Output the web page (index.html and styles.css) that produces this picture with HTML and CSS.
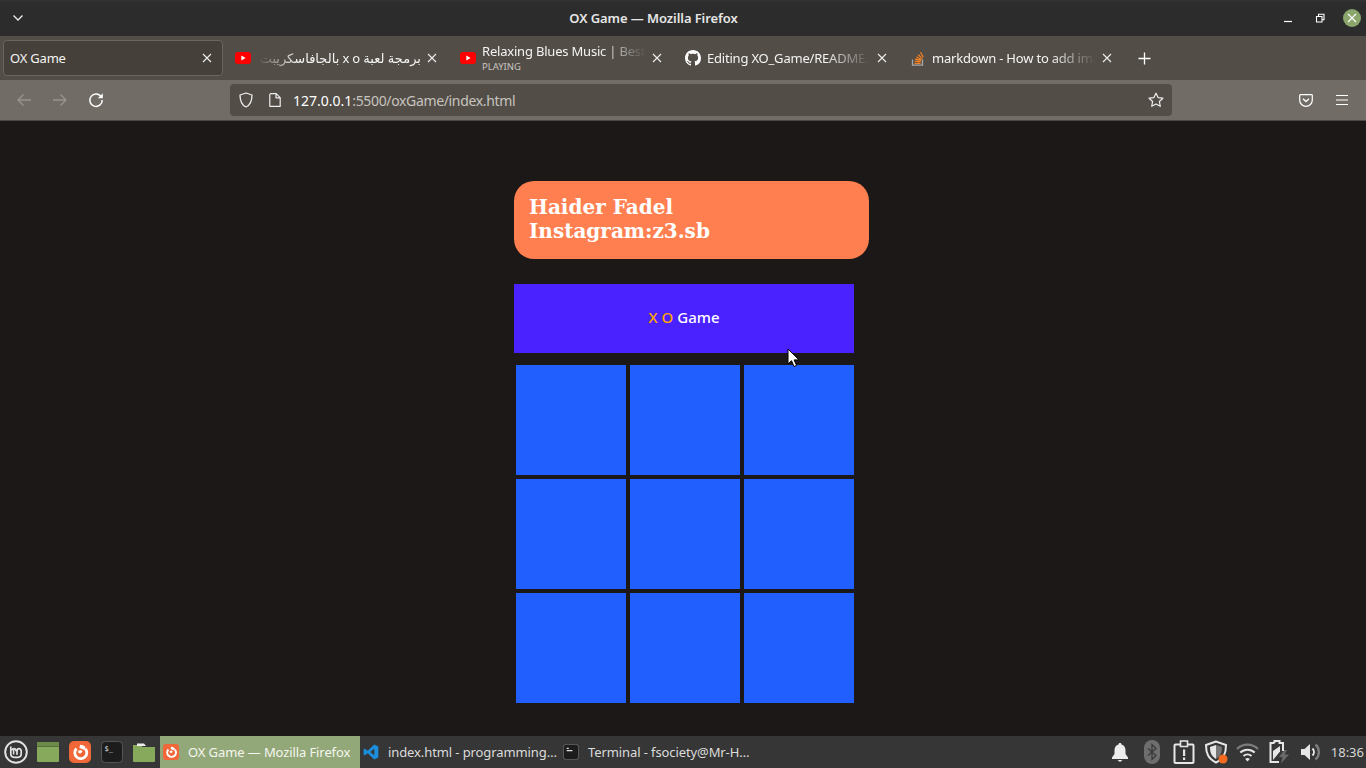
FILE: index.html
```html
<!DOCTYPE html>
<html lang="en">
<head>
<meta charset="utf-8">
<title>OX Game</title>
<link rel="stylesheet" href="styles.css">
</head>
<body>
<div class="window">
  <header class="titlebar">
    <svg class="wm-menu" width="12" height="8" viewBox="0 0 12 8"><path d="M1.500 1.500 6 6l4.500-4.500" fill="none" stroke="#eee" stroke-width="1.300"/></svg>
    <div class="title">OX Game — Mozilla Firefox</div>
    <div class="wm-buttons">
      <svg width="10" height="10" viewBox="0 0 10 10"><path d="M1 8.500h8" stroke="#fff" stroke-width="1.200"/></svg>
      <svg width="10" height="10" viewBox="0 0 10 10"><path d="M1.500 3.500h5.500v5.500H1.500z M3.500 3V1.200H9v5.500H7.300" fill="none" stroke="#fff" stroke-width="1.100"/></svg>
      <span class="wm-close"><svg width="10" height="10" viewBox="0 0 10 10"><path d="M1 1l8 8M9 1l-8 8" stroke="#fff" stroke-width="1.100"/></svg></span>
    </div>
  </header>

  <nav class="tabstrip">
    <div class="tab active">
      <span class="tab-label">OX Game</span>
      <svg class="close" width="10" height="10" viewBox="0 0 10 10"><path d="M1 1l8 8M9 1l-8 8" stroke="#eee" stroke-width="1.100"/></svg>
    </div>
    <div class="tab">
      <svg class="fav" width="16" height="12" viewBox="0 0 16 12"><rect width="16" height="12" rx="3" fill="#f00"/><path d="M6.300 3.500v5l4.300-2.500z" fill="#fff"/></svg>
      <span class="tab-label fade rtl" dir="rtl">برمجة لعبة x o بالجافاسكريبت</span>
      <svg class="close" width="10" height="10" viewBox="0 0 10 10"><path d="M1 1l8 8M9 1l-8 8" stroke="#eee" stroke-width="1.100"/></svg>
    </div>
    <div class="tab">
      <svg class="fav" width="16" height="12" viewBox="0 0 16 12"><rect width="16" height="12" rx="3" fill="#f00"/><path d="M6.300 3.500v5l4.300-2.500z" fill="#fff"/></svg>
      <span class="tab-stack">
        <span class="tab-label fade">Relaxing Blues Music | Best of Blues</span>
        <span class="tab-sub">PLAYING</span>
      </span>
      <svg class="close" width="10" height="10" viewBox="0 0 10 10"><path d="M1 1l8 8M9 1l-8 8" stroke="#eee" stroke-width="1.100"/></svg>
    </div>
    <div class="tab">
      <svg class="fav" width="16" height="16" viewBox="0 0 16 16"><path fill="#fff" d="M8 0C3.580 0 0 3.580 0 8c0 3.540 2.290 6.530 5.470 7.590.4.070.55-.17.55-.38 0-.19-.01-.82-.01-1.490-2.010.37-2.530-.49-2.690-.94-.09-.23-.48-.94-.82-1.130-.28-.15-.68-.52-.01-.53.630-.01 1.080.58 1.230.82.720 1.210 1.870.87 2.330.66.070-.52.280-.87.510-1.070-1.780-.2-3.640-.89-3.640-3.950 0-.87.310-1.590.820-2.150-.08-.2-.36-1.020.08-2.120 0 0 .67-.21 2.200.82.640-.18 1.320-.27 2-.27s1.360.09 2 .27c1.530-1.040 2.200-.82 2.200-.82.440 1.100.16 1.920.08 2.120.51.560.82 1.270.82 2.150 0 3.070-1.870 3.750-3.650 3.950.29.250.54.730.54 1.480 0 1.070-.01 1.930-.01 2.200 0 .21.150.46.550.38A8.010 8.010 0 0 0 16 8c0-4.420-3.580-8-8-8z"/></svg>
      <span class="tab-label fade">Editing XO_Game/README.md</span>
      <svg class="close" width="10" height="10" viewBox="0 0 10 10"><path d="M1 1l8 8M9 1l-8 8" stroke="#eee" stroke-width="1.100"/></svg>
    </div>
    <div class="tab">
      <svg class="fav" width="16" height="16" viewBox="0 0 16 16"><path d="M2.500 9.500v5.700h10V9.500" fill="none" stroke="#a8a8a8" stroke-width="1.300"/><path d="M4.500 13.300h6M4.700 11.200l5.900.6M5.300 9l5.600 1.500M6.500 6.800l5 2.900M8.300 4.700l4.100 3.900M10.500 2.300l2.800 4.900" stroke="#f48024" stroke-width="1.300"/></svg>
      <span class="tab-label fade">markdown - How to add images to README</span>
      <svg class="close" width="10" height="10" viewBox="0 0 10 10"><path d="M1 1l8 8M9 1l-8 8" stroke="#eee" stroke-width="1.100"/></svg>
    </div>
    <svg class="newtab" width="13" height="13" viewBox="0 0 13 13"><path d="M6.500.5v12M.5 6.500h12" stroke="#fff" stroke-width="1.300"/></svg>
  </nav>

  <div class="toolbar">
    <div class="nav-buttons">
      <svg width="16" height="16" viewBox="0 0 16 16"><path d="M15 8H2M7.500 2.500 2 8l5.500 5.500" fill="none" stroke="#97948e" stroke-width="1.300"/></svg>
      <svg width="16" height="16" viewBox="0 0 16 16"><path d="M1 8h13M8.500 2.500 14 8l-5.500 5.500" fill="none" stroke="#97948e" stroke-width="1.300"/></svg>
      <svg width="16" height="16" viewBox="0 0 16 16"><path d="M13.300 5A6.200 6.200 0 1 0 14.200 8" fill="none" stroke="#fff" stroke-width="1.500"/><path d="M14.800 1.200v5h-5z" fill="#fff"/></svg>
    </div>
    <div class="urlbar">
      <svg class="shield" width="16" height="16" viewBox="0 0 16 16"><path d="M8 1 2 3c0 6 1.500 10 6 12 4.500-2 6-6 6-12z" fill="none" stroke="#eee" stroke-width="1.300" stroke-linejoin="round"/></svg>
      <svg class="page" width="12" height="14" viewBox="0 0 12 14"><path d="M1.600.700h5.600l4 4v8.600H.8V1.500z M7 .8v4h4" fill="none" stroke="#eee" stroke-width="1.200" stroke-linejoin="round"/></svg>
      <span class="url"><span class="url-host">127.0.0.1</span><span class="url-rest">:5500/oxGame/index.html</span></span>
      <svg class="star" width="16" height="16" viewBox="0 0 16 16"><path d="m8 1.200 2.100 4.400 4.800.6-3.500 3.300.9 4.800L8 12l-4.300 2.300.9-4.800L1.100 6.200l4.800-.6z" fill="none" stroke="#eee" stroke-width="1.200" stroke-linejoin="round"/></svg>
    </div>
    <div class="tool-right">
      <svg width="14" height="13" viewBox="0 0 14 13"><path d="M1.500.7h11c.5 0 .8.300.8.800v4.500a6.300 6.300 0 0 1-12.600 0V1.500c0-.5.300-.8.800-.8z" fill="none" stroke="#fff" stroke-width="1.200"/><path d="M4 4.700 7 7.500l3-2.800" fill="none" stroke="#fff" stroke-width="1.300"/></svg>
      <svg width="14" height="12" viewBox="0 0 14 12"><path d="M1 1.500h12M1 6h12M1 10.500h12" stroke="#fff" stroke-width="1.200"/></svg>
    </div>
  </div>

  <main class="page-content">
    <div class="author">Haider Fadel<br>Instagram:z3.sb</div>
    <div class="game">
      <h1 class="game-title"><span class="accent">X O</span> Game</h1>
      <div class="board">
        <div class="cell"></div><div class="cell"></div><div class="cell"></div>
        <div class="cell"></div><div class="cell"></div><div class="cell"></div>
        <div class="cell"></div><div class="cell"></div><div class="cell"></div>
      </div>
    </div>
    <svg class="cursor" width="13" height="20" viewBox="0 0 13 20"><path d="M1 1v15l3.500-3.300 2.500 5.800 2.600-1.100-2.500-5.500h4.900z" fill="#fff" stroke="#000" stroke-width="1"/></svg>
  </main>

  <footer class="taskbar">
    <svg class="mint" width="24" height="24" viewBox="0 0 24 24"><circle cx="12" cy="12" r="10.800" fill="none" stroke="#e4e4e4" stroke-width="1.900"/><path d="M6.800 6.500v7.300c0 2.200 1.300 3.500 3.400 3.500h3.600c2.100 0 3.400-1.300 3.400-3.500v-2.600c0-1.500-1-2.500-2.200-2.500s-2 1-2 2.500v3.600M12 11.200c0-1.500-.9-2.500-2-2.500s-1.700.8-1.900 1.500" fill="none" stroke="#e4e4e4" stroke-width="1.700"/><path d="M9.600 9.500v5" stroke="#e4e4e4" stroke-width="1.500"/></svg>
    <svg class="launch" width="22" height="20" viewBox="0 0 22 20"><rect width="22" height="20" rx="1" fill="#87a95c"/><rect width="22" height="4" fill="#6d8b48"/><rect y="4" width="22" height="1" fill="#55703a"/></svg>
    <svg class="launch" width="22" height="22" viewBox="0 0 22 22"><rect width="22" height="22" rx="5" fill="#f0683a"/><path d="M7.500 7.500a6 6 0 1 0 8.800.2" fill="none" stroke="#fff" stroke-width="2.800"/><path d="M11.200 3.800c1.800 0 3.800.8 5.200 2.300l-.8 3-5.200-2.200z" fill="#fff"/><path d="M9 9.800l3-.8 1.500 1.600-1.800 1.900-2.200-.6z" fill="#fff"/></svg>
    <svg class="launch" width="22" height="22" viewBox="0 0 22 22"><rect x=".5" y=".5" width="21" height="21" rx="4" fill="#1c1c1c" stroke="#555"/><text x="3.500" y="9.500" class="term-glyph">$_</text></svg>
    <svg class="launch folder" width="22" height="20" viewBox="0 0 22 20"><path d="M0 3h8l1.500 2H22v14a1 1 0 0 1-1 1H1a1 1 0 0 1-1-1z" fill="#87a95c"/><path d="M4 1.500h7l2 2.500H4z" fill="#eee"/></svg>
    <div class="task current">
      <svg width="16" height="16" viewBox="0 0 22 22"><rect width="22" height="22" rx="4" fill="#f0683a"/><path d="M7.500 7.500a6 6 0 1 0 8.800.2" fill="none" stroke="#fff" stroke-width="2.800"/><path d="M11.200 3.800c1.800 0 3.800.8 5.200 2.300l-.8 3-5.200-2.200z" fill="#fff"/><path d="M9 9.800l3-.8 1.500 1.600-1.800 1.900-2.200-.6z" fill="#fff"/></svg>
      <span>OX Game — Mozilla Firefox</span>
    </div>
    <div class="task">
      <svg width="16" height="16" viewBox="0 0 16 16"><path d="M11.300.6 15.300 2.500v11l-4 1.900L4.700 9.200 1.900 11.300.6 10.700V5.300l1.300-.6 2.800 2.100zM11.300 4.800 7.300 8l4 3.200z" fill="#1b8fdc"/></svg>
      <span>index.html - programming…</span>
    </div>
    <div class="task">
      <svg width="16" height="16" viewBox="0 0 22 22"><rect x=".5" y=".5" width="21" height="21" rx="4" fill="#1c1c1c" stroke="#777"/><path d="M5 6h3M5 9h8" stroke="#ddd" stroke-width="1.600" fill="none"/></svg>
      <span>Terminal - fsociety@Mr-H…</span>
    </div>
    <div class="tray">
      <span class="tray-slot"><svg width="18" height="22" viewBox="0 0 18 22"><path d="M9 2c-1 0-1.500.6-1.500 1.400C5 4 3.500 6.400 3.500 9v4L1 16.500V18h16v-1.500L14.500 13V9c0-2.600-1.500-5-4-5.600C10.500 2.600 10 2 9 2zM6.500 19h5L9 21z" fill="#ededed"/></svg></span>
      <span class="tray-slot"><svg width="16" height="24" viewBox="0 0 16 24"><rect width="16" height="24" rx="8" fill="#6e6e6e"/><path d="M4 8.500l8 7L8 19.500V4.500l4 4-8 7" fill="none" stroke="#3a3a3a" stroke-width="1.300"/></svg></span>
      <span class="tray-slot"><svg width="22" height="24" viewBox="0 0 22 24"><path d="M7 4.500H2.500a1 1 0 0 0-1 1V22a1 1 0 0 0 1 1h17a1 1 0 0 0 1-1V5.500a1 1 0 0 0-1-1H15" fill="none" stroke="#e6e6e6" stroke-width="2"/><path d="M7.500 1h7v5.500h-7z" fill="none" stroke="#e6e6e6" stroke-width="1.600"/><path d="M10 9.500h2.200v6.500H10zM10 17.500h2.200v2.500H10z" fill="#e6e6e6"/></svg></span>
      <span class="tray-slot"><svg width="24" height="24" viewBox="0 0 24 24"><path d="M12 1.500 2 5c0 8 2 13.500 10 17.500 8-4 10-9.500 10-17.500z" fill="none" stroke="#e6e6e6" stroke-width="2"/><path d="M12 5 6 7c0 5 1 9 6 12z" fill="#e6e6e6"/><path d="M12 5l6 2c0 5-1 9-6 12z" fill="#777"/><circle cx="19" cy="19" r="4.500" fill="#f26b21"/></svg></span>
      <span class="tray-slot"><svg width="23" height="19" viewBox="0 0 23 19"><path d="M1 6a15 15 0 0 1 21 0" fill="none" stroke="#7c7c7c" stroke-width="2.200"/><path d="M4.300 9.500a10.500 10.500 0 0 1 14.400 0M7.500 13a6 6 0 0 1 8 0" fill="none" stroke="#e6e6e6" stroke-width="2"/><path d="M11.500 18.500 9.200 16a3 3 0 0 1 4.600 0z" fill="#e6e6e6"/></svg></span>
      <span class="tray-slot"><svg width="21" height="24" viewBox="0 0 21 24"><path d="M5.500 3V1h5v2h3.500v8M10 22H1.500V3h4" fill="none" stroke="#e6e6e6" stroke-width="2"/><path d="M4 20v-9l7-5v5.500z" fill="#e6e6e6"/><path d="M15.500 10l-5.500 7h3.500l-1.500 6.500 8-9h-4.500l2.500-4.500z" fill="#6a6a6a"/></svg></span>
      <span class="tray-slot"><svg width="23" height="22" viewBox="0 0 23 22"><path d="M1 8h3.500L10 3v16l-5.500-5H1z" fill="#e6e6e6"/><path d="M12.500 7.500a5 5 0 0 1 0 7" fill="none" stroke="#e6e6e6" stroke-width="2"/><path d="M15.500 3.500a10 10 0 0 1 0 15" fill="none" stroke="#7c7c7c" stroke-width="2.400"/></svg></span>
      <span class="clock">18:36</span>
    </div>
  </footer>
</div>
</body>
</html>
```

FILE: styles.css
```css
* { box-sizing: border-box; }
html, body { margin: 0; height: 100%; overflow: hidden; }
body { font-family: "Noto Sans", "DejaVu Sans", sans-serif; background: #1c1818; color: #fff; }

.window { display: flex; flex-direction: column; width: 1366px; height: 768px; }

.titlebar {
  flex: 0 0 36px;
  display: flex;
  align-items: center;
  padding: 0 5px 0 12px;
  background: linear-gradient(#333 0, #2c2c2c 3px);
}
.title {
  flex: 1;
  text-align: center;
  font-size: 13px;
  font-weight: 600;
  letter-spacing: -0.08px;
  color: #e6e6e6;
}
.wm-buttons { display: flex; align-items: center; gap: 22px; }
.wm-close {
  display: flex; align-items: center; justify-content: center;
  width: 18px; height: 18px;
  margin-left: -4px;
  border-radius: 50%;
  background: #8aa66d;
}

.tabstrip {
  flex: 0 0 44px;
  display: flex;
  align-items: center;
  padding-left: 3px;
  background: #524d47;
}
.tab {
  flex: 0 0 225px;
  min-width: 0;
  height: 36px;
  display: flex;
  align-items: center;
  gap: 6px;
  padding: 0 13px 0 10px;
  font-size: 13px;
  letter-spacing: -0.2px;
  color: #f4f4f4;
}
.tab.active {
  flex-basis: 220px;
  margin-right: 2px;
  padding: 0 10px 0 6px;
  background: #45413a;
  border: 1px solid #6a665f;
  border-radius: 4px;
}
.tab-label { flex: 1; min-width: 0; white-space: nowrap; overflow: hidden; }
.tab-label.fade {
  -webkit-mask-image: linear-gradient(to right, #000 72%, transparent 100%);
  mask-image: linear-gradient(to right, #000 72%, transparent 100%);
}
.tab-label.rtl {
  -webkit-mask-image: linear-gradient(to left, #000 75%, transparent 100%);
  mask-image: linear-gradient(to left, #000 75%, transparent 100%);
}
.tab-stack { flex: 1; min-width: 0; display: flex; flex-direction: column; }
.tab-stack .tab-label { flex: none; line-height: 17px; }
.tab-sub { font-size: 9.500px; line-height: 13px; letter-spacing: 0; color: #c9c6c1; }
.fav { flex: none; }
.close { flex: none; }
.newtab { flex: none; margin-left: 13px; }

.toolbar {
  flex: 0 0 41px;
  display: flex;
  align-items: center;
  background: #716d66;
  border-bottom: 1px solid #4c4944;
  padding: 0 17px 0 16px;
}
.nav-buttons { display: flex; gap: 20px; }
.urlbar {
  margin-left: 126px;
  width: 942px;
  height: 32px;
  display: flex;
  align-items: center;
  padding: 0 8px;
  background: #524d47;
  border-radius: 4px;
  font-size: 14px;
  color: #c7c4bf;
}
.page { margin-left: 15px; }
.url { margin-left: 12px; flex: 1; }
.url-host { color: #fff; }
.url-rest { letter-spacing: -0.35px; }
.tool-right { margin-left: auto; display: flex; align-items: center; gap: 22px; }

.page-content {
  position: relative;
  flex: 1;
  padding: 60px 0 0 514px;
  background: #1c1818;
}
.author {
  width: 355px;
  height: 78px;
  padding: 14px 15px;
  border-radius: 20px;
  background: #ff7f50;
  font-family: "DejaVu Serif", serif;
  font-weight: 700;
  font-size: 20px;
  line-height: 24px;
}
.game { width: 340px; margin-top: 25px; }
.game-title {
  margin: 0;
  height: 69px;
  padding-bottom: 4px;
  display: flex;
  align-items: center;
  justify-content: center;
  gap: 4px;
  background: #4a21ff;
  font-size: 15px;
  font-weight: 500;
}
.accent { color: #ffa500; }
.board {
  display: grid;
  grid-template-columns: repeat(3, 110px);
  grid-auto-rows: 110px;
  gap: 4px;
  margin: 12px 0 0 2px;
}
.cell { background: #225fff; }
.cursor { position: absolute; left: 787px; top: 227px; }

.taskbar {
  flex: 0 0 32px;
  display: flex;
  align-items: center;
  padding-left: 4px;
  background: #363636;
  font-size: 13px;
  color: #dcdcdc;
}
.mint { margin-right: 9px; }
.launch { margin-right: 10px; }
.launch.folder { margin-right: 5px; }
.term-glyph { font-family: "DejaVu Sans Mono", monospace; font-size: 7px; fill: #e4e4e4; }
.task {
  flex: 0 0 200px;
  min-width: 0;
  height: 32px;
  display: flex;
  align-items: center;
  gap: 9px;
  padding: 0 3px;
  white-space: nowrap;
  letter-spacing: -0.1px;
}
.task.current { background: #93a878; color: #f4f6ef; }
.tray {
  margin-left: auto;
  display: flex;
  align-items: center;
  padding-right: 2px;
}
.tray-slot { flex: 0 0 32px; display: flex; align-items: center; justify-content: center; }
.clock { margin-left: 3px; font-size: 13px; color: #d6d6d6; }
```
